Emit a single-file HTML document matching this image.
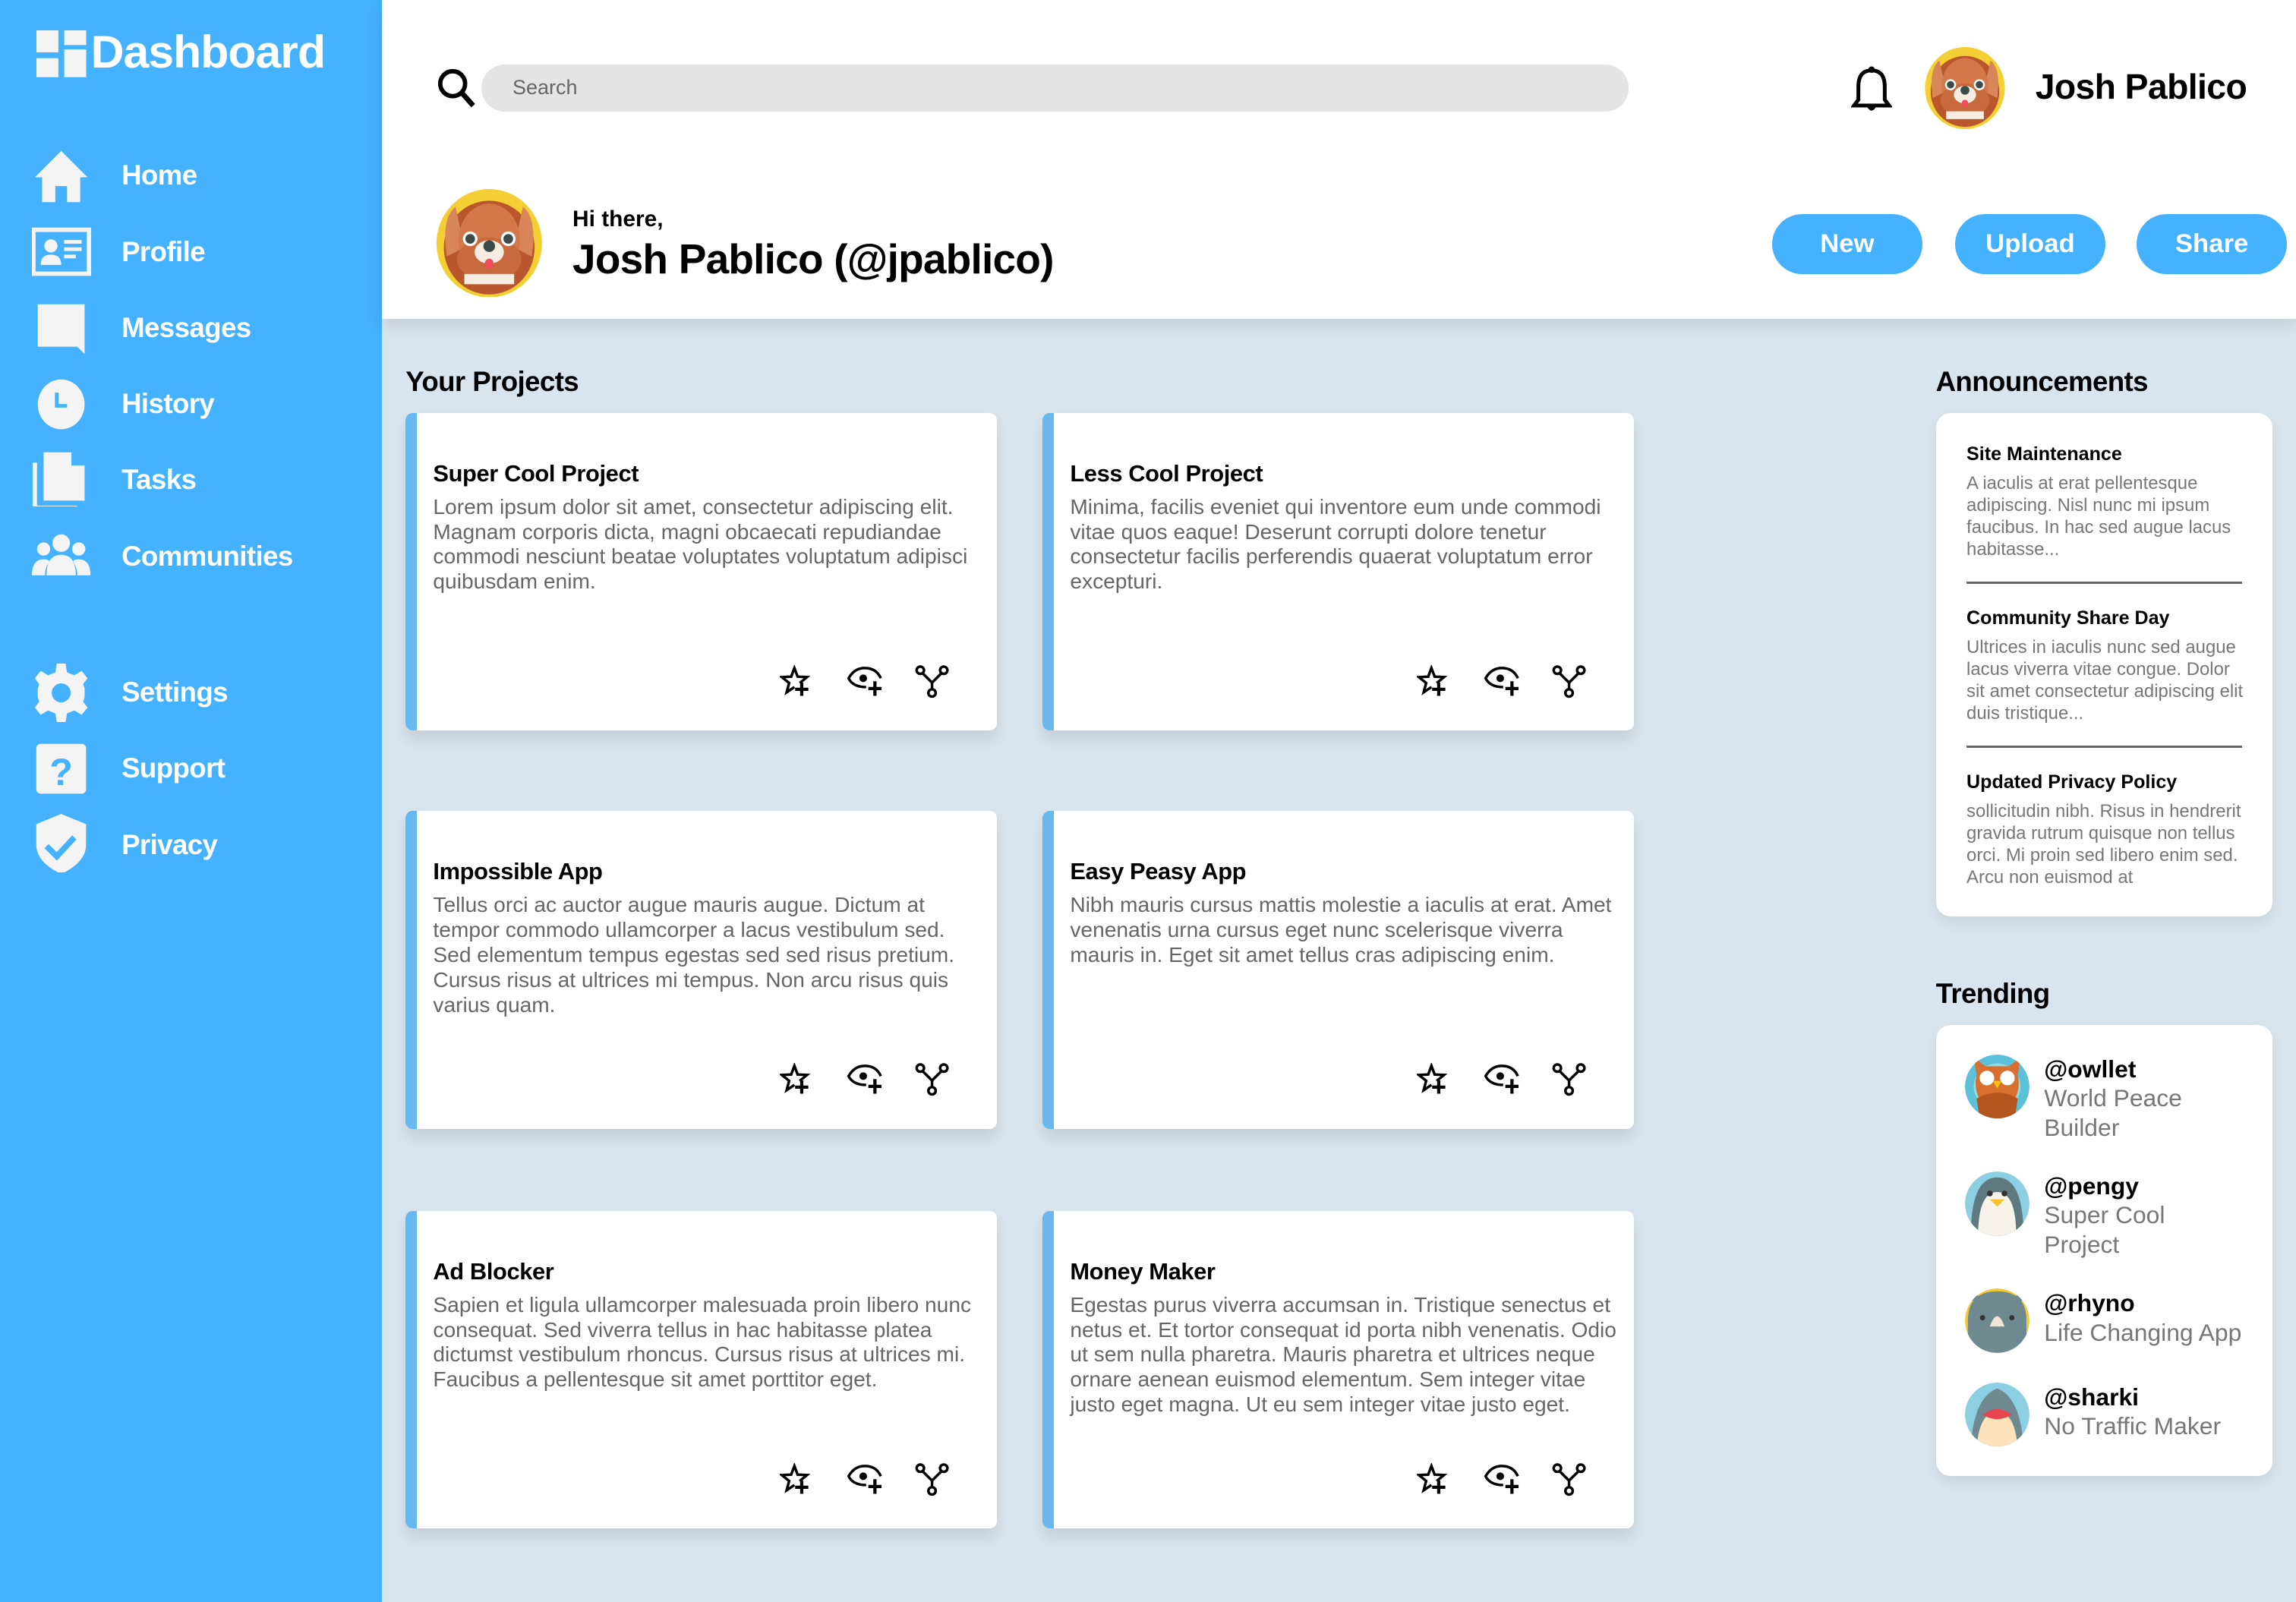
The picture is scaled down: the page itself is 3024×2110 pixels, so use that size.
<!DOCTYPE html>
<html><head><meta charset="utf-8"><style>
*{box-sizing:border-box;margin:0;padding:0}
html,body{width:3024px;height:2110px;overflow:hidden;background:#d9e5ee}
#w{zoom:1.92857;width:1568px;height:1094px;position:relative;font-family:"Liberation Sans",Arial,sans-serif;background:#d9e5ee}
.a{position:absolute}
#side{left:0;top:0;width:261px;height:1094px;background:#44b2ff}
.nav{position:absolute;left:83px;color:#fff;font-weight:bold;font-size:19px;line-height:24px;letter-spacing:-0.3px}
.ni{position:absolute;left:22px;width:40px;height:40px}
#hdr{left:261px;top:0;width:1307px;height:218px;background:#fff;box-shadow:0 4px 12px rgba(0,0,0,.12)}
.btn{position:absolute;top:146px;width:103px;height:41px;border-radius:21px;background:#44b2ff;color:#fff;font-weight:bold;font-size:18px;text-align:center;line-height:41px}
.card{position:absolute;width:404px;height:217px;background:#fff;border-radius:5px;border-left:8px solid #67b8ee;box-shadow:0 6px 10px rgba(0,0,0,.1)}
.card h3{position:absolute;left:11px;top:32px;font-size:16px;font-weight:bold;color:#000;letter-spacing:-0.2px}
.card p{position:absolute;left:11px;top:56px;width:376px;font-size:14.6px;line-height:17px;color:#666}
.card .ic{position:absolute;top:172px;left:248px}
.panel{position:absolute;left:1322px;width:230px;background:#fff;border-radius:10px;box-shadow:0 4px 10px rgba(0,0,0,.08)}
.an h4{font-size:13px;font-weight:bold;color:#000;margin-bottom:5px}
.an p{font-size:12.4px;line-height:15px;color:#777}
.an{position:absolute;left:21px;width:192px}
.sep{position:absolute;left:21px;width:188px;height:2px;background:#666}
.tr{position:absolute;left:20px;width:210px}
.tr .av{position:absolute;left:0;top:0;width:44px;height:44px;border-radius:50%;overflow:hidden}
.tr .t{position:absolute;left:54px;top:0;font-size:16.5px;line-height:20px}
.tr b{color:#000}
.tr span{color:#777}
h2{position:absolute;font-size:19px;font-weight:bold;color:#000;letter-spacing:-0.3px}
</style></head><body><div id="w">
<div id="side" class="a">
 <svg class="a" style="left:25px;top:21px" width="34" height="32" viewBox="0 0 34 32"><g fill="#f4f4f4"><rect x="0" y="0" width="15" height="15"/><rect x="0" y="19" width="15" height="13"/><rect x="19" y="0" width="15" height="10"/><rect x="19" y="13" width="15" height="19"/></g></svg>
 <div class="a" style="left:62px;top:17px;color:#fff;font-weight:bold;font-size:31.5px;letter-spacing:-0.5px">Dashboard</div>

 <svg class="ni" style="top:100px" viewBox="0 0 40 40"><path fill="#f4f4f4" d="M20 3 L38 21 L33 21 L33 38 L24 38 L24 27 L16 27 L16 38 L7 38 L7 21 L2 21 Z"/></svg>
 <div class="nav" style="top:108px">Home</div>
 <svg class="ni" style="top:152px" viewBox="0 0 40 40"><rect x="1" y="5" width="38" height="30" fill="none" stroke="#f4f4f4" stroke-width="3"/><circle cx="13" cy="16" r="4.5" fill="#f4f4f4"/><path fill="#f4f4f4" d="M6 29 Q6 22 13 22 Q20 22 20 29Z"/><rect x="22" y="12" width="12" height="2.5" fill="#f4f4f4"/><rect x="22" y="17" width="12" height="2.5" fill="#f4f4f4"/><rect x="22" y="22" width="8" height="2.5" fill="#f4f4f4"/></svg>
 <div class="nav" style="top:160px">Profile</div>
 <svg class="ni" style="top:204px" viewBox="0 0 40 40"><path fill="#f4f4f4" d="M4 4 H36 V38 L31 33 H4 Z"/></svg>
 <div class="nav" style="top:212px">Messages</div>
 <svg class="ni" style="top:256px" viewBox="0 0 40 40"><ellipse cx="20" cy="20" rx="16" ry="17" fill="#f4f4f4"/><path d="M17 12 V21 H24" fill="none" stroke="#44b2ff" stroke-width="2.5"/></svg>
 <div class="nav" style="top:264px">History</div>
 <svg class="ni" style="top:306px" viewBox="0 0 40 40"><path fill="#f4f4f4" d="M8 3 H27 L36 12 V36 H8 Z"/><path d="M2 10 V41 H31" fill="none" stroke="#f4f4f4" stroke-width="3"/><path d="M27 3 V12 H36" fill="#44b2ff"/></svg>
 <div class="nav" style="top:316px">Tasks</div>
 <svg class="ni" style="top:362px" viewBox="0 0 40 40"><circle cx="20" cy="9" r="6" fill="#f4f4f4"/><circle cx="8" cy="13" r="4.5" fill="#f4f4f4"/><circle cx="32" cy="13" r="4.5" fill="#f4f4f4"/><path fill="#f4f4f4" d="M10 31 Q10 17 20 17 Q30 17 30 31Z M0 31 Q0 20 8 20 Q12 20 12 22 Q9 25 9 31Z M40 31 Q40 20 32 20 Q28 20 28 22 Q31 25 31 31Z"/></svg>
 <div class="nav" style="top:368px">Communities</div>
 <svg class="ni" style="top:453px" viewBox="0 0 40 40"><path fill="#f4f4f4" d="M17 0 H23 L24 6 L29 8 L34 5 L38 10 L35 14 L36 17 V23 L35 26 L38 30 L34 35 L29 32 L24 34 L23 40 H17 L16 34 L11 32 L6 35 L2 30 L5 26 L4 23 V17 L5 14 L2 10 L6 5 L11 8 L16 6 Z"/><circle cx="20" cy="20" r="6.5" fill="#44b2ff"/></svg>
 <div class="nav" style="top:461px">Settings</div>
 <svg class="ni" style="top:505px" viewBox="0 0 40 40"><rect x="3" y="3" width="34" height="34" rx="3" fill="#f4f4f4"/><text x="20" y="31" text-anchor="middle" font-family="Liberation Sans" font-weight="bold" font-size="26" fill="#44b2ff">?</text></svg>
 <div class="nav" style="top:513px">Support</div>
 <svg class="ni" style="top:556px" viewBox="0 0 40 40"><path fill="#f4f4f4" d="M20 0 L37 7 V21 Q37 33 20 41 Q3 33 3 21 V7 Z"/><path d="M10 22 L17 29 L29 16" fill="none" stroke="#44b2ff" stroke-width="4"/></svg>
 <div class="nav" style="top:565px">Privacy</div>
</div>

<div id="hdr" class="a">
 <svg class="a" style="left:37px;top:46px" width="27" height="28" viewBox="0 0 27 28"><circle cx="11" cy="11" r="8.5" fill="none" stroke="#000" stroke-width="3"/><path d="M17 17 L25 26" stroke="#000" stroke-width="3.5"/></svg>
 <div class="a" style="left:68px;top:44px;width:783px;height:32px;border-radius:16px;background:#e4e4e4;color:#666;font-size:14px;line-height:32px;padding-left:21px">Search</div>
 <svg class="a" style="left:1003px;top:44px" width="28" height="33" viewBox="0 0 28 33"><path d="M14 4 Q5 4 5 15 V24 L2 28 H26 L23 24 V15 Q23 4 14 4Z" fill="none" stroke="#000" stroke-width="2.6"/><circle cx="14" cy="3.5" r="2.2"/><path d="M11 29 Q14 34 17 29Z"/></svg>
 <svg class="a" style="left:1053px;top:32px" width="56" height="56" viewBox="0 0 74 74"><use href="#dog"/></svg>
 <div class="a" style="left:1129px;top:45px;font-size:24px;font-weight:bold;color:#000;letter-spacing:-0.3px">Josh Pablico</div>
 <svg class="a" style="left:36px;top:129px" width="74" height="74" viewBox="0 0 74 74"><g id="dog"><ellipse cx="37" cy="37" rx="36" ry="37" fill="#f4cf33"/><ellipse cx="37" cy="40" rx="31" ry="32" fill="#b9562d"/><path d="M14 12 Q4 20 8 46 L20 40Z M60 12 Q70 20 66 46 L54 40Z" fill="#d8855a"/><ellipse cx="37" cy="35" rx="21" ry="25" fill="#d4784a"/><ellipse cx="37" cy="48" rx="22" ry="15" fill="#c86a3e"/><circle cx="24" cy="34" r="5" fill="#fff"/><circle cx="24" cy="34" r="3.3" fill="#3c4a4a"/><circle cx="50" cy="34" r="5" fill="#fff"/><circle cx="50" cy="34" r="3.3" fill="#3c4a4a"/><ellipse cx="37" cy="43" rx="10" ry="8" fill="#f5ece2"/><ellipse cx="37" cy="39" rx="4" ry="4" fill="#3c4a4a"/><ellipse cx="37" cy="51" rx="3" ry="3.5" fill="#ef4e5a"/><rect x="20" y="58" width="34" height="7" fill="#f5ece2"/></g></svg>
 <div class="a" style="left:130px;top:141px;font-size:15.5px;font-weight:bold;color:#000">Hi there,</div>
 <div class="a" style="left:130px;top:160px;font-size:28.5px;font-weight:bold;color:#000;letter-spacing:-0.4px">Josh Pablico (@jpablico)</div>
 <div class="btn" style="left:949px">New</div>
 <div class="btn" style="left:1074px">Upload</div>
 <div class="btn" style="left:1198px">Share</div>
</div>

<svg width="0" height="0" style="position:absolute"><defs>
<g id="icons" fill="none" stroke="#000" stroke-width="1.8">
 <path d="M13.6 12.3 L18.6 8.2 L12.2 7.9 L10 2 L7.8 7.9 L1.4 8.2 L6.4 12.2 L4.7 18.6 L10 15" stroke-linejoin="miter"/>
 <path d="M15 12 V21 M10.5 16.5 H19.5" stroke-width="2.2"/>
 <path d="M59 15 Q50 15 47 9 Q51 2 58 2 Q66 2 69 9"/>
 <circle cx="57" cy="9" r="2.6" fill="#000" stroke="none"/>
 <path d="M65 11 V21 M60.5 16 H69.5" stroke-width="2.2"/>
 <circle cx="96" cy="3.5" r="2.5"/><circle cx="112" cy="3.5" r="2.5"/><circle cx="104" cy="19" r="2.5"/>
 <path d="M97.5 5.5 L104 12 L110.5 5.5 M104 12 V16.5"/>
</g></defs></svg>

<h2 style="left:277px;top:250px">Your Projects</h2>
<div class="card" style="left:277px;top:282px"><h3>Super Cool Project</h3><p>Lorem ipsum dolor sit amet, consectetur adipiscing elit. Magnam corporis dicta, magni obcaecati repudiandae commodi nesciunt beatae voluptates voluptatum adipisci quibusdam enim.</p><svg class="ic" width="120" height="24" viewBox="0 0 120 24"><use href="#icons"/></svg></div>
<div class="card" style="left:712px;top:282px"><h3>Less Cool Project</h3><p>Minima, facilis eveniet qui inventore eum unde commodi vitae quos eaque! Deserunt corrupti dolore tenetur consectetur facilis perferendis quaerat voluptatum error excepturi.</p><svg class="ic" width="120" height="24" viewBox="0 0 120 24"><use href="#icons"/></svg></div>
<div class="card" style="left:277px;top:554px"><h3>Impossible App</h3><p>Tellus orci ac auctor augue mauris augue. Dictum at tempor commodo ullamcorper a lacus vestibulum sed. Sed elementum tempus egestas sed sed risus pretium. Cursus risus at ultrices mi tempus. Non arcu risus quis varius quam.</p><svg class="ic" width="120" height="24" viewBox="0 0 120 24"><use href="#icons"/></svg></div>
<div class="card" style="left:712px;top:554px"><h3>Easy Peasy App</h3><p>Nibh mauris cursus mattis molestie a iaculis at erat. Amet venenatis urna cursus eget nunc scelerisque viverra mauris in. Eget sit amet tellus cras adipiscing enim.</p><svg class="ic" width="120" height="24" viewBox="0 0 120 24"><use href="#icons"/></svg></div>
<div class="card" style="left:277px;top:827px"><h3>Ad Blocker</h3><p>Sapien et ligula ullamcorper malesuada proin libero nunc consequat. Sed viverra tellus in hac habitasse platea dictumst vestibulum rhoncus. Cursus risus at ultrices mi. Faucibus a pellentesque sit amet porttitor eget.</p><svg class="ic" width="120" height="24" viewBox="0 0 120 24"><use href="#icons"/></svg></div>
<div class="card" style="left:712px;top:827px"><h3>Money Maker</h3><p>Egestas purus viverra accumsan in. Tristique senectus et netus et. Et tortor consequat id porta nibh venenatis. Odio ut sem nulla pharetra. Mauris pharetra et ultrices neque ornare aenean euismod elementum. Sem integer vitae justo eget magna. Ut eu sem integer vitae justo eget.</p><svg class="ic" width="120" height="24" viewBox="0 0 120 24"><use href="#icons"/></svg></div>

<h2 style="left:1322px;top:250px">Announcements</h2>
<div class="panel" style="top:282px;height:344px">
 <div class="an" style="top:21px"><h4>Site Maintenance</h4><p>A iaculis at erat pellentesque adipiscing. Nisl nunc mi ipsum faucibus. In hac sed augue lacus habitasse...</p></div>
 <div class="sep" style="top:115px"></div>
 <div class="an" style="top:133px"><h4>Community Share Day</h4><p>Ultrices in iaculis nunc sed augue lacus viverra vitae congue. Dolor sit amet consectetur adipiscing elit duis tristique...</p></div>
 <div class="sep" style="top:227px"></div>
 <div class="an" style="top:245px"><h4>Updated Privacy Policy</h4><p>sollicitudin nibh. Risus in hendrerit gravida rutrum quisque non tellus orci. Mi proin sed libero enim sed. Arcu non euismod at</p></div>
</div>

<h2 style="left:1322px;top:668px">Trending</h2>
<div class="panel" style="top:700px;height:308px">
 <div class="tr" style="top:20px"><svg class="av" viewBox="0 0 44 44"><circle cx="22" cy="22" r="22" fill="#5cc0d8"/><circle cx="22" cy="22" r="16" fill="#8fdbe6"/><path d="M6 2 L14 8 H30 L38 2 L36 14 Q40 30 22 44 Q4 30 8 14Z" fill="#d86f2e"/><circle cx="15" cy="16" r="5" fill="#fff"/><circle cx="29" cy="16" r="5" fill="#fff"/><path d="M19 18 L22 23 L25 18Z" fill="#f9c30f"/><path d="M8 30 Q22 22 36 30 L34 44 H10Z" fill="#b4541e"/></svg><div class="t"><b>@owllet</b><br><span>World Peace<br>Builder</span></div></div>
 <div class="tr" style="top:100px"><svg class="av" viewBox="0 0 44 44"><circle cx="22" cy="22" r="22" fill="#8ccfe2"/><path d="M4 44 Q4 4 22 4 Q40 4 40 44Z" fill="#5e7a80"/><path d="M9 44 Q9 14 22 14 Q35 14 35 44Z" fill="#f7f2ea"/><circle cx="17" cy="15" r="2" fill="#333"/><circle cx="27" cy="15" r="2" fill="#333"/><path d="M17 19 H27 L22 24Z" fill="#f6c431"/></svg><div class="t"><b>@pengy</b><br><span>Super Cool<br>Project</span></div></div>
 <div class="tr" style="top:180px"><svg class="av" viewBox="0 0 44 44"><circle cx="22" cy="22" r="22" fill="#f3c937"/><path d="M2 22 Q2 2 22 2 Q42 2 42 22 V44 H2Z" fill="#6e8a90"/><path d="M4 3 L10 10 M40 3 L34 10" stroke="#6e8a90" stroke-width="5"/><path d="M17 26 Q22 12 27 26Z" fill="#f2e6da"/><circle cx="12" cy="20" r="1.8" fill="#333"/><circle cx="32" cy="20" r="1.8" fill="#333"/></svg><div class="t"><b>@rhyno</b><br><span>Life Changing App</span></div></div>
 <div class="tr" style="top:244px"><svg class="av" viewBox="0 0 44 44"><circle cx="22" cy="22" r="22" fill="#8ccfe2"/><path d="M4 44 Q6 10 22 4 Q38 10 40 44Z" fill="#6e8a90"/><path d="M8 44 Q10 20 22 20 Q34 20 36 44Z" fill="#fde3bb"/><path d="M12 22 Q22 14 32 22 Q22 28 12 22Z" fill="#e8464f"/></svg><div class="t"><b>@sharki</b><br><span>No Traffic Maker</span></div></div>
</div>
</div></body></html>
